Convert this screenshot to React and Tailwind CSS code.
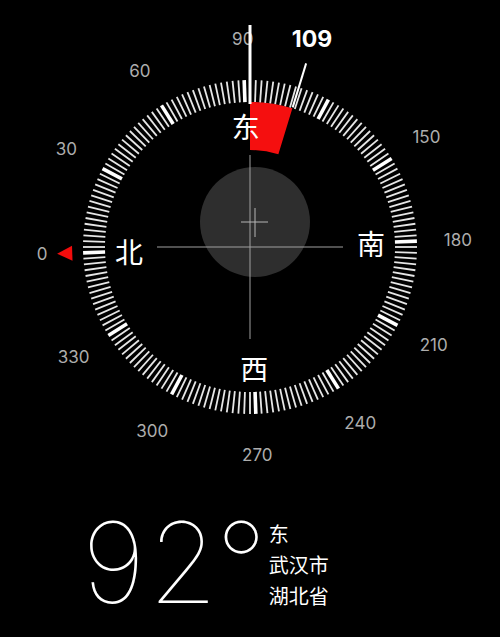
import React from "react";

const CX = 250;
const CY = 247;
const HEADING = 92;

function polar(r, a) {
  const rad = (a * Math.PI) / 180;
  return [CX + r * Math.sin(rad), CY - r * Math.cos(rad)];
}

function Dial() {
  const ticks = [];
  for (let d = 0; d < 360; d += 2) {
    const a = d - HEADING;
    const major = d % 30 === 0;
    ticks.push(
      <line
        key={d}
        x1={CX}
        y1={CY - 167}
        x2={CX}
        y2={CY - 145}
        stroke={major ? "#ffffff" : "#e6e6e6"}
        strokeWidth={major ? 3.6 : 1.8}
        transform={`rotate(${a} ${CX} ${CY})`}
      />
    );
  }
  const labels = [];
  for (let d = 0; d < 360; d += 30) {
    if (d === 120) continue;
    const [x, y] = polar(208, d - HEADING);
    labels.push(
      <text
        key={d}
        x={x}
        y={y}
        textAnchor="middle"
        dominantBaseline="central"
        fontFamily="Inter, 'Liberation Sans', sans-serif"
        fontSize="17"
        fill="#adadad"
      >
        {d}
      </text>
    );
  }
  const cardinals = [
    ["北", 0],
    ["东", 90],
    ["南", 180],
    ["西", 270],
  ].map(([t, d]) => {
    const [x, y] = polar(121, d - HEADING);
    return (
      <text
        key={t}
        x={x}
        y={y}
        textAnchor="middle"
        dominantBaseline="central"
        fontFamily="'Noto Sans CJK SC', sans-serif"
        fontSize="28"
        fill="#ffffff"
      >
        {t}
      </text>
    );
  });

  const target = 109 - HEADING;
  const [o1x, o1y] = polar(145, 0);
  const [o2x, o2y] = polar(145, target);
  const [i2x, i2y] = polar(97, target);
  const [i1x, i1y] = polar(97, 0);
  const wedge = `M${o1x} ${o1y} A145 145 0 0 1 ${o2x} ${o2y} L${i2x} ${i2y} A97 97 0 0 0 ${i1x} ${i1y} Z`;
  const [t1x, t1y] = polar(146, target);
  const [t2x, t2y] = polar(192, target);

  const [tipx, tipy] = polar(193, -HEADING);
  const [b1x, b1y] = polar(178, -HEADING - 2.4);
  const [b2x, b2y] = polar(178, -HEADING + 2.4);

  return (
    <svg width="500" height="500" viewBox="0 0 500 500" className="block">
      <path d={wedge} fill="#f50f0f" />
      <circle cx="255" cy="222" r="55" fill="#2e2e2e" />
      <line x1={CX} y1={CY - 92} x2={CX} y2={CY + 92} stroke="#a0a0a0" strokeWidth="1" />
      <line x1={CX - 93} y1={CY} x2={CX + 93} y2={CY} stroke="#a0a0a0" strokeWidth="1" />
      <line x1="241" y1="222" x2="268" y2="222" stroke="#b5b5b5" strokeWidth="1" />
      <line x1="255" y1="208" x2="255" y2="237" stroke="#b5b5b5" strokeWidth="1" />
      {ticks}
      {labels}
      {cardinals}
      <polygon points={`${b1x},${b1y} ${b2x},${b2y} ${tipx},${tipy}`} fill="#f20c0c" />
      <line x1={t1x} y1={t1y} x2={t2x} y2={t2y} stroke="#ffffff" strokeWidth="2" />
      <line x1={CX} y1="25" x2={CX} y2="104" stroke="#ffffff" strokeWidth="3" />
      <text
        x="312"
        y="39"
        textAnchor="middle"
        dominantBaseline="central"
        fontFamily="Inter, 'Liberation Sans', sans-serif"
        fontSize="23"
        fontWeight="700"
        fill="#ffffff"
      >
        109
      </text>
    </svg>
  );
}

export default function App() {
  return (
    <div className="w-[500px] h-[637px] bg-black overflow-hidden flex flex-col">
      <Dial />
      <div className="flex items-start mt-[6px] pl-[82px]">
        <div className="flex items-start whitespace-nowrap font-['Inter'] font-thin text-[112px] leading-none text-white">
          <span className="tracking-[3px]">92</span>
          <span className="ml-[-5px]">°</span>
        </div>
        <div className="ml-[2px] mt-[12px] flex flex-col font-['Noto_Sans_CJK_SC',sans-serif] text-[20px] leading-[31px] text-white">
          <span>东</span>
          <span>武汉市</span>
          <span>湖北省</span>
        </div>
      </div>
    </div>
  );
}
